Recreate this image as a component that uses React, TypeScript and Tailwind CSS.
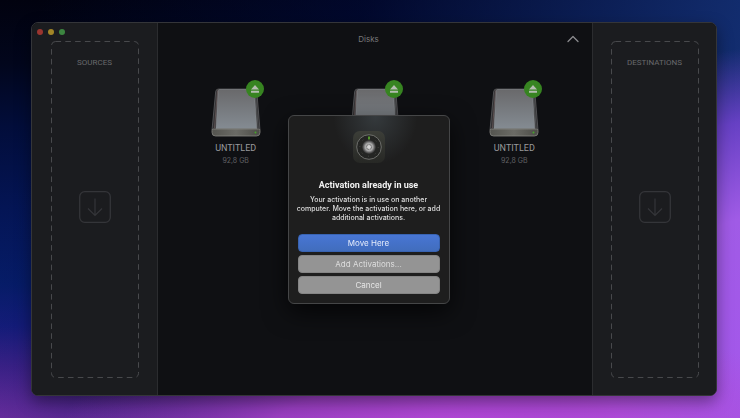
import React, { useState } from 'react';

const disks = [
  { id: 1, name: 'UNTITLED', size: '92,8 GB' },
  { id: 2, name: 'UNTITLED', size: '92,8 GB' },
  { id: 3, name: 'UNTITLED', size: '92,8 GB' },
];

const DiskIcon = () => (
  <svg width="50" height="50" viewBox="0 0 50 50" aria-hidden="true">
    <defs>
      <linearGradient id="diskTop" x1="0" y1="0" x2="0" y2="1">
        <stop offset="0" stopColor="#69696b" />
        <stop offset="1" stopColor="#848b92" />
      </linearGradient>
      <linearGradient id="diskFront" x1="0" y1="0" x2="1" y2="0">
        <stop offset="0" stopColor="#54544f" />
        <stop offset="0.5" stopColor="#6b6b66" />
        <stop offset="1" stopColor="#4c4c47" />
      </linearGradient>
    </defs>
    <path d="M7.5 1h35.500q2.500 0 2.800 2.500L49 42H1L4.700 3.500Q5 1 7.500 1z" fill="#323133" stroke="#666568" strokeWidth="0.7" />
    <path d="M6.500 2.500L3.500 40" stroke="#5c5051" strokeWidth="1" />
    <path d="M44.300 3l2.800 37" stroke="#55585a" strokeWidth="0.8" />
    <path d="M8.500 1.500h33.500q1.200 0 1.300 1.200L45.800 40.500H5L7.200 2.700q.1-1.200 1.300-1.200z" fill="url(#diskTop)" stroke="#909498" strokeWidth="0.5" />
    <path d="M2.500 41h45q1.500 0 1.500 1.500v2q0 3.500-3.500 3.500h-41Q1 48 1 44.500v-2Q1 41 2.500 41z" fill="url(#diskFront)" stroke="#858580" strokeWidth="0.8" />
    <circle cx="44.500" cy="44.600" r="1" fill="#45a52a" />
  </svg>
);

const Disk = ({ name, size }: { name: string; size: string }) => (
  <li className="flex flex-col items-center">
    <div className="relative">
      <DiskIcon />
      <button
        type="button"
        aria-label={`Eject ${name}`}
        className="absolute -top-2 -right-[3px] flex h-[18px] w-[18px] items-center justify-center rounded-full bg-[#378421]"
      >
        <svg width="10" height="10" viewBox="0 0 10 10" fill="#b5bdb1" aria-hidden="true">
          <path d="M5 1l4 4.500H1z" />
          <rect x="1" y="6.700" width="8" height="2" rx="0.300" />
        </svg>
      </button>
    </div>
    <span className="mt-1 text-[9px] leading-3 text-[#99999b]">{name}</span>
    <span className="mt-px font-['Inter',sans-serif] text-[7px] leading-3 text-[#606063]">{size}</span>
  </li>
);

const DropZone = ({ title }: { title: string }) => (
  <section aria-label={title} className="relative flex flex-1 flex-col items-center pt-4">
    <svg className="absolute inset-0 h-full w-full overflow-visible" aria-hidden="true">
      <rect width="100%" height="100%" rx="4" transform="translate(0.5 0.5)" fill="none" stroke="#48494c" strokeWidth="1" strokeDasharray="5.600 4.200" />
    </svg>
    <h2 className="text-[8px] leading-3 text-[#68696c]">{title}</h2>
    <div className="flex flex-1 items-center pb-8">
      <svg width="32" height="32" viewBox="0 0 32 32" fill="none" stroke="#343539" aria-hidden="true">
        <rect x="0.700" y="0.700" width="30.600" height="30.600" rx="5" strokeWidth="1.300" />
        <path d="M16 7.500v17M9 17.500l7 7 7-7" strokeWidth="1.200" />
      </svg>
    </div>
  </section>
);

const AppIcon = () => (
  <svg width="34" height="34" viewBox="0 0 34 34" aria-hidden="true">
    <defs>
      <linearGradient id="appTile" x1="0" y1="0" x2="0" y2="1">
        <stop offset="0" stopColor="#3c3e38" />
        <stop offset="1" stopColor="#272825" />
      </linearGradient>
      <radialGradient id="appKnob">
        <stop offset="0" stopColor="#e0e0e0" />
        <stop offset="0.550" stopColor="#a5a5a5" />
        <stop offset="0.800" stopColor="#5c5c5c" />
        <stop offset="1" stopColor="#2b2b2b" />
      </radialGradient>
    </defs>
    <rect x="1" y="1" width="32" height="32" rx="7" fill="url(#appTile)" />
    <circle cx="17" cy="17" r="12.300" fill="#242523" stroke="#757673" strokeWidth="0.900" />
    <circle cx="17" cy="17" r="9.200" fill="none" stroke="#4d4e4b" strokeWidth="1" strokeDasharray="0.800 6.425" />
    <circle cx="17" cy="17" r="7" fill="url(#appKnob)" />
    <circle cx="17" cy="17" r="2.600" fill="none" stroke="#757575" strokeWidth="0.900" strokeDasharray="3.300 0.780" />
    <path d="M17 6.500v3" stroke="#63bd32" strokeWidth="1.500" />
  </svg>
);

const ActivationDialog = ({ onClose }: { onClose: () => void }) => (
  <div className="fixed inset-0 z-10 flex items-center justify-center pr-[3px]">
    <div
      role="dialog"
      aria-labelledby="activation-title"
      className="flex w-[162px] flex-col items-center rounded-md border border-[#454647] bg-[#1e1e1e] bg-[radial-gradient(ellipse_42px_48px_at_54%_0%,#353a3d,transparent)] px-[9px] pt-[14px] pb-[9px] text-center shadow-[0_8px_24px_rgba(0,0,0,0.7)]"
    >
      <AppIcon />
      <h1 id="activation-title" className="mt-[15px] text-[9px] leading-3 font-bold text-[#f2f2f2]">
        Activation already in use
      </h1>
      <p className="mt-1 font-['Inter',sans-serif] text-[7px] leading-[9px] font-medium whitespace-nowrap text-[#dedede]">
        Your activation is in use on another<br />
        computer. Move the activation here, or add<br />
        additional activations.
      </p>
      <div className="mt-3 flex w-full flex-col gap-[3px] font-['Inter',sans-serif] text-[8px]">
        <button type="button" onClick={onClose} className="h-[18px] rounded-[4px] border border-[#3863b2] bg-linear-to-b from-[#4876d4] to-[#416dbd] text-[#e5ecfa]">
          Move Here
        </button>
        <button type="button" className="h-[18px] rounded-[4px] border border-[#858585] bg-[#949494] text-[#dedede]">
          Add Activations...
        </button>
        <button type="button" onClick={onClose} className="h-[18px] rounded-[4px] border border-[#858585] bg-[#949494] text-[#e5e5e5]">
          Cancel
        </button>
      </div>
    </div>
  </div>
);

const App = () => {
  const [isDialogOpen, setIsDialogOpen] = useState(true);
  const [isExpanded, setIsExpanded] = useState(true);

  return (
    <div className="flex min-h-screen bg-[#02104a] bg-[radial-gradient(ellipse_52%_30%_at_60%_104%,#b648d8_0%,#b246d4cc_45%,transparent_100%),radial-gradient(ellipse_60%_78%_at_112%_88%,#a556ec_0%,#a05be6_50%,#7b45d8cc_78%,transparent_100%),linear-gradient(100deg,transparent_5%,#020d4488_45%,#15337a_100%),linear-gradient(180deg,#01020f_0%,#02061c_15%,#020d3a_30%,#041555_50%,#061c68_68%,#141c7a_78%,#3c2188_88%,#6a2ea0_100%)] py-[22px] pr-[23px] pl-[31px] font-['Roboto',sans-serif] antialiased">
      <main className="flex flex-1 overflow-hidden rounded-[7px] border border-[#343539] bg-[#0f1013] shadow-[0_6px_16px_rgba(0,0,0,0.4)]">
        <aside className="flex w-[126px] flex-col border-r border-[#2b2c2f] bg-[#1b1c1f] px-[19px] pb-[18px]">
          <div className="-mx-[14px] flex h-[18px] items-center gap-[5px]">
            <span className="h-[6px] w-[6px] rounded-full bg-[#9b352f]" />
            <span className="h-[6px] w-[6px] rounded-full bg-[#a28527]" />
            <span className="h-[6px] w-[6px] rounded-full bg-[#3c8540]" />
          </div>
          <DropZone title="SOURCES" />
        </aside>

        {/* Disk list */}
        <section className="flex-1 px-2">
          <header className="flex h-[31px] items-center pr-[5px]">
            <h2 className="flex-1 pl-1 text-center font-['Inter',sans-serif] text-[8px] leading-3 text-[#77777a]">Disks</h2>
            <button type="button" aria-label="Toggle disks" aria-expanded={isExpanded} onClick={() => setIsExpanded(!isExpanded)}>
              <svg width="12" height="8" viewBox="0 0 12 8" fill="none" stroke="#8a8a8d" strokeWidth="1.300" strokeLinecap="round" strokeLinejoin="round" aria-hidden="true">
                <path d="M1 6.500l5-5 5 5" />
              </svg>
            </button>
          </header>
          {isExpanded && (
            <ul className="mt-[34px] grid grid-cols-3">
              {disks.map((disk) => (
                <Disk key={disk.id} name={disk.name} size={disk.size} />
              ))}
            </ul>
          )}
        </section>

        <aside className="flex w-[124px] flex-col border-l border-[#2b2c2f] bg-[#1b1c1f] px-[18px] pt-[18px] pb-[18px]">
          <DropZone title="DESTINATIONS" />
        </aside>
      </main>

      {isDialogOpen && <ActivationDialog onClose={() => setIsDialogOpen(false)} />}
    </div>
  );
};

export default App;
